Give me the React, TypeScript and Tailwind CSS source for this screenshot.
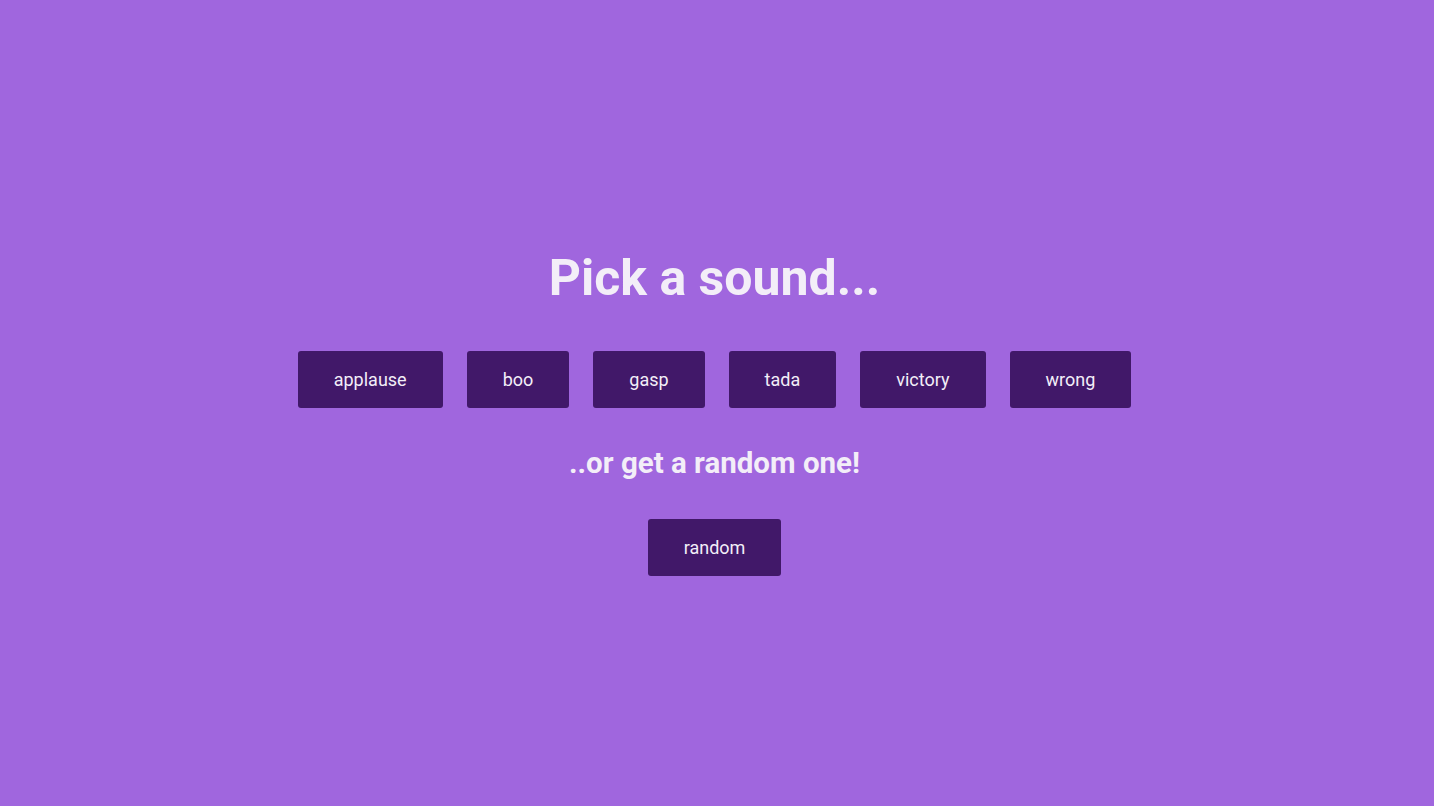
const sounds = ['applause', 'boo', 'gasp', 'tada', 'victory', 'wrong']

const SoundButton = ({ label }: { label: string }) => (
  <button className="rounded-[3px] bg-[#411869] px-[36px] py-[18px] text-[18px] leading-[21px] text-[#f3eef8]">
    {label}
  </button>
)

export default function App() {
  return (
    <div
      className="flex h-screen w-full flex-col items-center justify-center bg-[#a066de] pt-[20px] pr-[5px] text-[#f3eef8]"
      style={{ fontFamily: 'Roboto, sans-serif' }}
    >
      <h1 className="text-[50px] font-bold leading-[56px]">Pick a sound...</h1>
      <div className="mt-[45px] flex gap-6">
        {sounds.map((s) => (
          <SoundButton key={s} label={s} />
        ))}
      </div>
      <h2 className="mt-[39px] text-[29.5px] font-bold leading-[33px]">..or get a random one!</h2>
      <div className="mt-[39px]">
        <SoundButton label="random" />
      </div>
    </div>
  )
}
